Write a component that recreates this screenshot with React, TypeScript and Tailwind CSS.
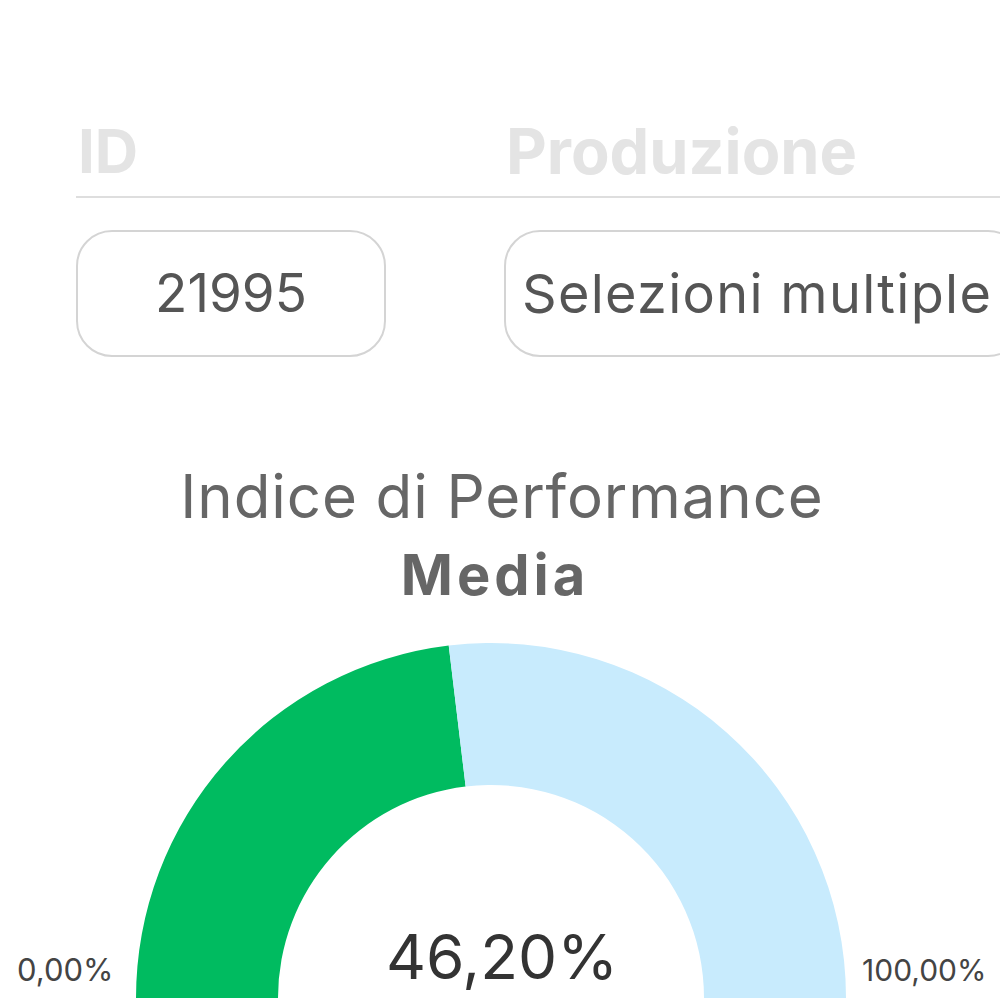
import React from "react";

const F = { fontFamily: "Inter, 'Noto Sans', sans-serif" };

function arcPath(cx: number, cy: number, R: number, r: number, a0: number, a1: number) {
  const rad = (a: number) => (a * Math.PI) / 180;
  const p = (rr: number, a: number) => [cx + rr * Math.cos(rad(a)), cy - rr * Math.sin(rad(a))];
  const [ox0, oy0] = p(R, a0);
  const [ox1, oy1] = p(R, a1);
  const [ix1, iy1] = p(r, a1);
  const [ix0, iy0] = p(r, a0);
  return `M${ox0} ${oy0} A${R} ${R} 0 0 1 ${ox1} ${oy1} L${ix1} ${iy1} A${r} ${r} 0 0 0 ${ix0} ${iy0} Z`;
}

export default function App() {
  const value = 46.2;
  const split = 180 - (value / 100) * 180;
  const cx = 355, cy = 355, R = 355, r = 213;
  return (
    <div className="w-[1000px] h-[1000px] overflow-hidden bg-white" style={F}>
      <div className="pt-[112px] pl-[76px]">
        <div className="flex border-b-2 border-[#dedede] h-[86px] items-start">
          <div className="w-[430px] pl-[2px] text-[60px] leading-[78px] font-bold text-[#e4e4e4]">ID</div>
          <div className="text-[63px] leading-[78px] font-bold text-[#e4e4e4] whitespace-nowrap">Produzione</div>
        </div>
        <div className="flex mt-[32px] gap-[118px]">
          <div className="w-[310px] h-[127px] shrink-0 rounded-[36px] border-2 border-[#d4d4d4] flex items-center justify-center text-[53px] text-[#555555]">
            21995
          </div>
          <div className="w-[520px] h-[127px] shrink-0 rounded-[36px] border-2 border-[#d4d4d4] flex items-center pl-[16px] text-[54px] tracking-[1.3px] text-[#555555] whitespace-nowrap">
            Selezioni multiple
          </div>
        </div>
      </div>
      <div className="mt-[98px] flex flex-col items-center">
        <div className="text-[60px] leading-[82px] text-[#666666] pl-[4px] tracking-[0.9px]">Indice di Performance</div>
        <div className="text-[56px] leading-[76px] font-bold text-[#666666] -ml-[10px] tracking-[4px]">Media</div>
      </div>
      <div className="mt-[30px] flex items-end">
        <div className="w-[136px] pl-[17px] mb-[8px] text-[31px] leading-[40px] text-[#444444]">0,00%</div>
        <div className="relative w-[710px] h-[355px] shrink-0">
          <svg width="710" height="355" viewBox="0 0 710 355">
            <path d={arcPath(cx, cy, R, r, 180, split)} fill="#00bb60" />
            <path d={arcPath(cx, cy, R, r, split, 0)} fill="#c8ebfd" />
          </svg>
          <div className="absolute left-0 right-0 bottom-[6px] text-center text-[62px] leading-[70px] text-[#333333] pl-[22px]">46,20%</div>
        </div>
        <div className="pl-[16px] mb-[8px] text-[30px] leading-[40px] text-[#444444] whitespace-nowrap">100,00%</div>
      </div>
    </div>
  );
}
